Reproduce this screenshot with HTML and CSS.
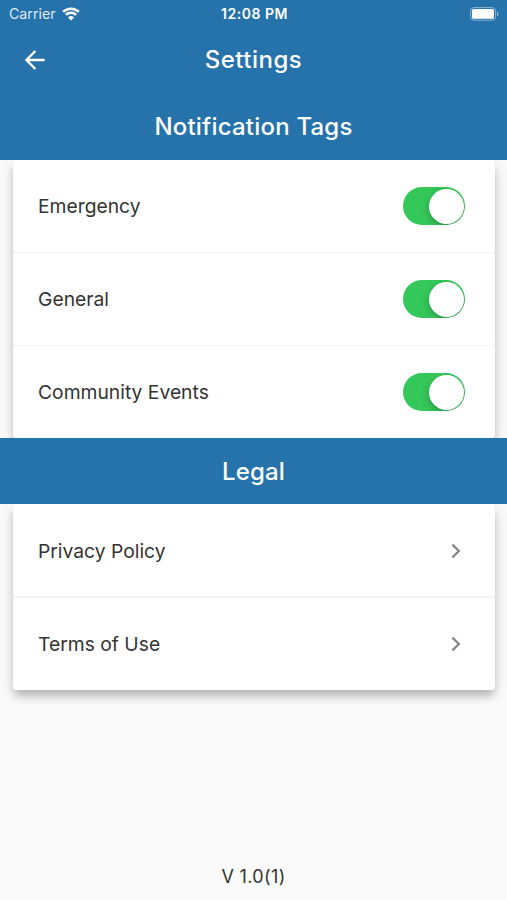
FILE: index.html
```html
<!DOCTYPE html>
<html lang="en">

<head>
    <meta charset="utf-8">
    <meta name="viewport" content="width=device-width">
    <title>Settings</title>
    <link rel="stylesheet" href="styles.css">
</head>

<body>
    <div class="screen">
        <header class="header">
            <div class="status">
                <div class="carrier">
                    <span>Carrier</span>
                    <svg class="wifi" viewBox="0 0 18 14">
                        <path d="M1.2 4.9a11 11 0 0 1 15.6 0M3.9 7.8a7.2 7.2 0 0 1 10.2 0" />
                        <path class="dot" d="M9 13.4L6 10.4a4.3 4.3 0 0 1 6 0z" />
                    </svg>
                </div>
                <span class="time">12:08 PM</span>
                <svg class="battery" viewBox="0 0 30 14">
                    <rect class="shell" x="0.6" y="0.6" width="25" height="12.6" rx="3.4" />
                    <rect class="level" x="2" y="2" width="22" height="9.8" rx="1.5" />
                    <path class="cap" d="M27 4.6c2 .6 2 4 0 4.6z" />
                </svg>
            </div>
            <div class="appbar">
                <a href="#" class="back">
                    <svg viewBox="0 0 20 20">
                        <path d="M19.6 10H1.8M10.4 1L1.4 10l9 9" />
                    </svg>
                </a>
                <h1 class="title">Settings</h1>
                <span></span>
            </div>
        </header>

        <h2 class="section">Notification Tags</h2>
        <div class="list">
            <div class="row">
                <span>Emergency</span>
                <span class="switch"></span>
            </div>
            <div class="row">
                <span>General</span>
                <span class="switch"></span>
            </div>
            <div class="row">
                <span>Community Events</span>
                <span class="switch"></span>
            </div>
        </div>

        <h2 class="section legal">Legal</h2>
        <div class="list links">
            <a href="#" class="row">
                <span>Privacy Policy</span>
                <svg class="chevron" viewBox="0 0 10 16">
                    <path d="M1.4 1.6L7.9 8l-6.5 6.4" />
                </svg>
            </a>
            <a href="#" class="row">
                <span>Terms of Use</span>
                <svg class="chevron" viewBox="0 0 10 16">
                    <path d="M1.4 1.6L7.9 8l-6.5 6.4" />
                </svg>
            </a>
        </div>

        <footer class="version">V 1.0(1)</footer>
    </div>
</body>

</html>
```
FILE: styles.css
```css
* {
    box-sizing: border-box;
}

body {
    margin: 0;
    background: #fafafa;
    color: #333;
    font-family: Inter, "Liberation Sans", sans-serif;
}

.screen {
    display: flex;
    flex-direction: column;
    height: 900px;
    overflow: hidden;
}

.header,
.section {
    position: relative;
    z-index: 1;
    background: #2672ab;
    color: #fff;
}

.status {
    display: grid;
    grid-template-columns: 1fr auto 1fr;
    align-items: center;
    height: 27px;
    padding: 0 7px 0 9px;
}

.carrier {
    display: flex;
    align-items: center;
    gap: 6px;
    font-size: 14.2px;
    color: #dfebf4;
}

.wifi {
    width: 18px;
    height: 14px;
    fill: none;
    stroke: #fff;
    stroke-width: 2.5;
}

.wifi .dot {
    fill: #fff;
    stroke: none;
}

.time {
    font-size: 14px;
    font-weight: 600;
    letter-spacing: .5px;
}

.battery {
    justify-self: end;
    width: 30px;
    height: 14px;
    fill: #fff;
}

.battery .shell {
    fill: none;
    stroke: #8db5d5;
    stroke-width: 1;
}

.battery .cap {
    fill: #8db5d5;
}

.appbar {
    display: grid;
    grid-template-columns: 1fr auto 1fr;
    align-items: center;
    height: 66px;
    padding: 0 25px 2px;
}

.back {
    display: flex;
    padding-top: 1px;
}

.back svg {
    width: 20px;
    height: 20px;
    fill: none;
    stroke: #fff;
    stroke-width: 2.4;
}

.title,
.section {
    margin: 0;
    font-size: 24px;
    font-weight: 500;
    letter-spacing: .5px;
}

.section {
    display: flex;
    align-items: center;
    justify-content: center;
    height: 67px;
    letter-spacing: .2px;
}

.legal {
    height: 66px;
}

.list {
    display: flex;
    flex-direction: column;
    gap: 1px;
    margin: 0 12px 0 13px;
    border-radius: 4px;
    background: #f4f4f4;
    box-shadow: 0 7px 8px -1px rgba(0, 0, 0, .22), 0 4px 16px rgba(0, 0, 0, .1);
}

.row {
    display: flex;
    align-items: center;
    justify-content: space-between;
    height: 92px;
    padding: 0 30px 0 25px;
    border-radius: 4px;
    background: #fff;
    color: #333;
    font-size: 19.3px;
    text-decoration: none;
}

.links {
    gap: 2px;
}

.links .row:first-child {
    padding-top: 1px;
}

.switch {
    display: flex;
    justify-content: flex-end;
    width: 62px;
    height: 38px;
    padding: 1.5px;
    border-radius: 19px;
    background: #34c759;
    overflow: hidden;
}

.switch::after {
    content: "";
    width: 35px;
    height: 35px;
    border-radius: 50%;
    background: #fff;
    box-shadow: 0 3px 8px rgba(0, 0, 0, .2), 0 2px 1px rgba(0, 0, 0, .08);
}

.chevron {
    width: 10px;
    height: 16px;
    margin-right: 4px;
    fill: none;
    stroke: #888;
    stroke-width: 2.3;
}

.version {
    margin-top: auto;
    padding-bottom: 12px;
    font-size: 18px;
    line-height: 22px;
    letter-spacing: .35px;
    text-align: center;
}
```
